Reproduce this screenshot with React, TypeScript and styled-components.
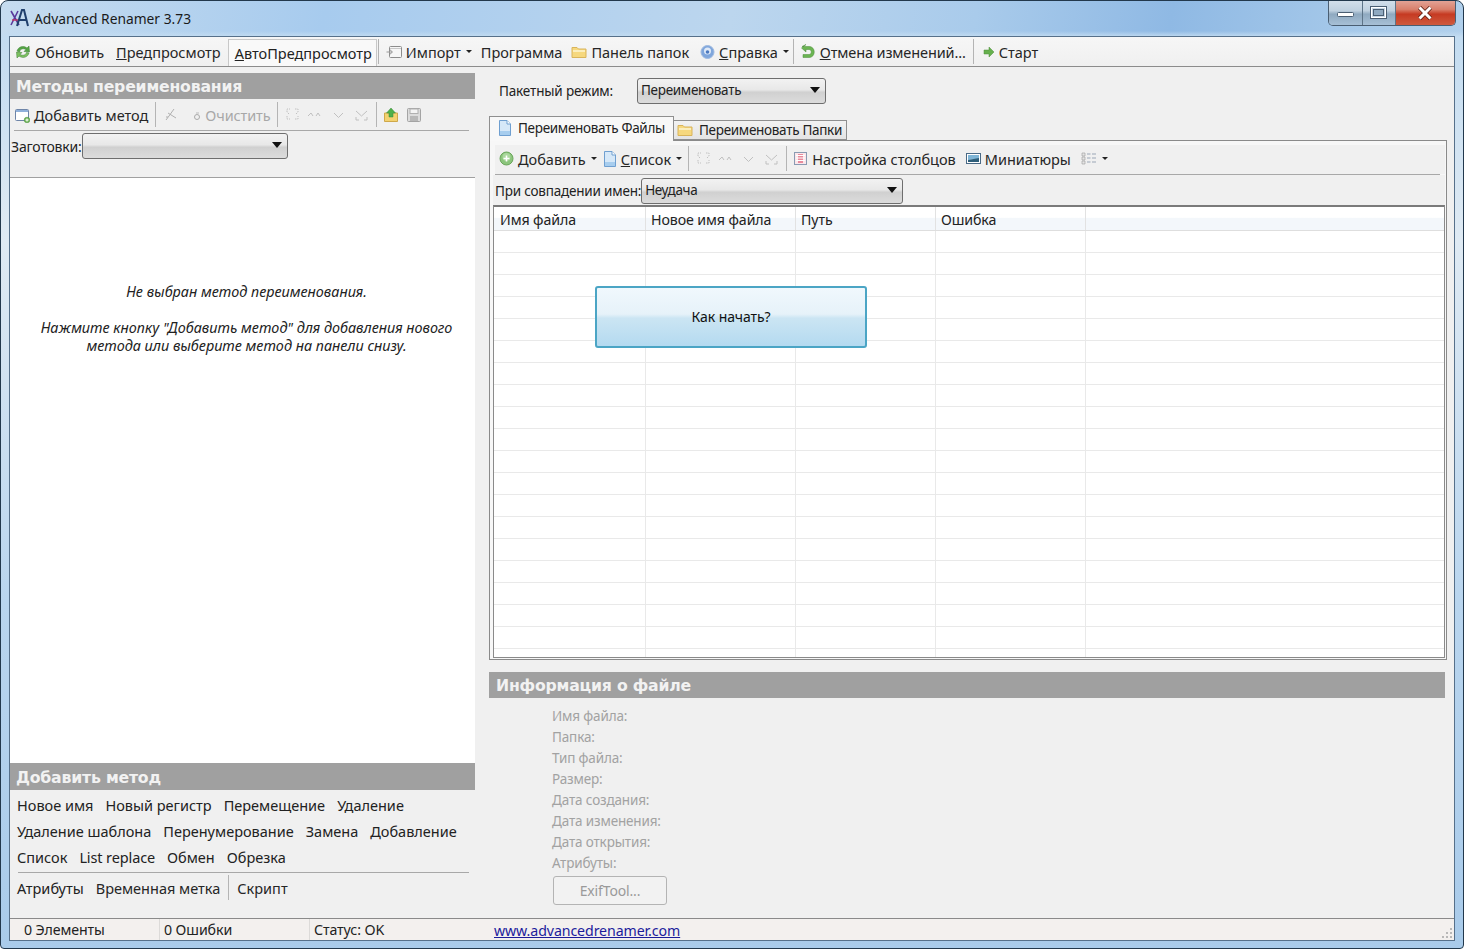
import React from "react";
import styled, { createGlobalStyle } from "styled-components";

const Global = createGlobalStyle`
  html, body { margin: 0; padding: 0; background: #fff; }
  body { font-family: "Noto Sans", "Open Sans", sans-serif; font-size: 14.5px; color: #222; }
  * { box-sizing: border-box; }
`;

const Frame = styled.div`
  width: 1464px; height: 949px; display: flex; flex-direction: column;
  padding: 0 8px 7px; border: 1px solid #22384c; border-radius: 8px 8px 4px 4px;
  background:
    linear-gradient(180deg, rgba(170,205,236,0) 0, rgba(170,205,236,0) 30px, #c3dcf1 36px, #dfeaf3 240px, #b9d5ee 600px, #a9cbea 949px),
    linear-gradient(100deg, #c6dcef 0%, #a7cbee 20%, #bcd6ee 45%, #a9cbeb 60%, #8fb9e4 72%, #a9cbea 85%, #c0d9ef 100%);
`;
const TitleBar = styled.div`
  height: 35px; flex: none; display: flex; align-items: center; justify-content: space-between;
`;
const TitleLeft = styled.div`display: flex; align-items: center; gap: 4px; color: #1a1a1a; font-size: 13.8px;`;
const WinControls = styled.div`
  display: flex; align-self: flex-start; height: 25px; margin-top: 0; margin-right: -1px;
  border: 1px solid #4a5e72; border-top: none; border-radius: 0 0 5px 5px; overflow: hidden;
`;
const WinButton = styled.div<{ $w: number; $close?: boolean }>`
  width: ${p => p.$w}px; display: flex; align-items: center; justify-content: center;
  border-right: 1px solid ${p => (p.$close ? "transparent" : "#5d7488")};
  background: ${p => p.$close
    ? "linear-gradient(180deg,#e2a295 0,#d9806c 35%,#c63a22 55%,#cf5a3e 100%)"
    : "linear-gradient(180deg,#d2dfea 0,#bfd0df 40%,#8fa9c0 55%,#a7c0d6 100%)"};
`;
const Client = styled.div`
  flex: 1; min-height: 0; display: flex; flex-direction: column;
  background: #f0f0f0; border: 1px solid #56708a;
`;
const MainBar = styled.div`
  height: 30px; flex: none; display: flex; align-items: center; margin-top: 0;
  padding-left: 5px; background: linear-gradient(180deg,#f6f6f6,#f0f0f0); border-bottom: 1px solid #8c8c8c;
`;
const ToolBtn = styled.div<{ $ml?: number; $off?: boolean }>`
  display: flex; align-items: center; gap: 4px; margin-left: ${p => p.$ml ?? 0}px; white-space: nowrap;
  color: ${p => (p.$off ? "#a8a8a8" : "#262626")}; line-height: 20px;
`;
const CheckedBtn = styled.div`
  display: flex; align-items: center; height: 27px; margin: 2px 0 0 7px; padding: 0 4px 0 6px;
  background: #f9f9f9; border: 1px solid #c8c8c8; border-bottom: none; white-space: nowrap;
`;
const TightLabel = styled.span`letter-spacing: -0.12px;`;
const Sep = styled.div<{ $ml: number; $h?: number }>`
  width: 1px; height: ${p => p.$h ?? 25}px; background: #b4b4b4; flex: none; margin-left: ${p => p.$ml}px;
`;
const Caret = styled.span`
  width: 0; height: 0; border: 3px solid transparent; border-top: 3px solid #222; border-bottom: 0;
  margin-left: 1px; display: inline-block; flex: none;
`;
const Main = styled.div`flex: 1; min-height: 0; display: flex;`;
const LeftCol = styled.div`width: 465px; flex: none; display: flex; flex-direction: column; padding-top: 6px;`;
const RightCol = styled.div`width: 958px; margin-left: 14px; flex: none; display: flex; flex-direction: column; padding-top: 11px;`;
const SectionHead = styled.div<{ $h?: number; $ml?: number; $pt?: number }>`
  height: ${p => p.$h ?? 26}px; flex: none; display: flex; align-items: center;
  padding-left: ${p => p.$ml ?? 6}px; padding-top: ${p => p.$pt ?? 0}px; background: #a0a0a0; color: #f2f2f2;
  font: bold 15.7px "DejaVu Sans", Verdana, sans-serif; letter-spacing: -0.2px;
`;
const LeftTools = styled.div`
  height: 30px; margin: 2px 6px 0 4px; flex: none; display: flex; align-items: center; padding-bottom: 2px; border-bottom: 1px solid #a8a8a8;
`;
const PresetRow = styled.div`
  height: 47px; flex: none; display: flex; align-items: flex-start; padding: 2px 0 0 1px;
  border-bottom: 1px solid #a0a0a0;
`;
const FieldLabel = styled.span<{ $narrow?: boolean }>`
  font-size: ${p => (p.$narrow ? 13.5 : 14)}px; letter-spacing: -0.2px;
  line-height: 27px; white-space: nowrap;
`;
const Select = styled.div<{ $w: number }>`
  width: ${p => p.$w}px; height: 26px; flex: none; display: flex; align-items: center; justify-content: space-between;
  padding: 0 5px 2px 3px; border: 1px solid #6e6e6e; border-radius: 3px; font-size: 13.5px; letter-spacing: -0.3px;
  background: linear-gradient(180deg,#f2f2f2 0,#e8e8e8 45%,#d0d0d0 55%,#dcdcdc 100%);
`;
const SelectCaret = styled.span`
  width: 0; height: 0; border: 5px solid transparent; border-top: 6px solid #111; border-bottom: 0; flex: none;
`;
const WhiteArea = styled.div`
  flex: 1; min-height: 0; background: #fff; padding: 105px 18px 0 26px; text-align: center;
  font-style: italic; line-height: 18px; font-size: 14.4px; color: #222;
`;
const Hint = styled.p`margin: 0 0 18px;`;
const MethodRows = styled.div`padding: 2px 0 16px 7px; display: flex; flex-direction: column;`;
const MethodRow = styled.div`height: 26px; display: flex; align-items: center; gap: 12px; white-space: nowrap;`;
const MethodDivider = styled.div`height: 1px; background: #a8a8a8; margin: 2px 6px 0 1px;`;
const MethodLast = styled.div`height: 29px; display: flex; align-items: center; white-space: nowrap;`;
const ModeRow = styled.div`height: 25px; flex: none; display: flex; align-items: center; padding-left: 10px;`;
const ModeLabel = styled.span`width: 138px; font-size: 13.5px; letter-spacing: -0.15px;`;
const Tabs = styled.div`height: 24px; margin-top: 13px; flex: none; display: flex; align-items: flex-end; position: relative; z-index: 1;`;
const Tab = styled.div<{ $active?: boolean }>`
  display: flex; align-items: center; white-space: nowrap; font-size: 13.5px; letter-spacing: -0.3px;
  border: 1px solid #8f8f8f; border-bottom: ${p => (p.$active ? "none" : "1px solid #8f8f8f")};
  ${p => p.$active
    ? "width: 185px; height: 25px; margin-bottom: -1px; background: #f8f8f8; padding: 0 0 3px 7px; gap: 6px; border-right: 1px solid #8f8f8f;"
    : "width: 173px; height: 20px; background: linear-gradient(180deg,#f2f2f2,#e4e4e4); padding: 0 0 1px 3px; gap: 6px; border-left: none;"}
`;
const Pane = styled.div`
  height: 520px; flex: none; display: flex; flex-direction: column; padding: 4px 1px 1px 3px;
  background: #f7f7f7; border: 1px solid #8a8a8a;
`;
const PaneTools = styled.div`
  height: 29px; flex: none; margin-left: 2px; display: flex; align-items: center; background: #f0f0f0;
  padding: 0 0 2px 2px; position: relative;
`;
const PaneToolLine = styled.div`height: 1px; flex: none; background: #a8a8a8; margin: 0 5px 0 2px;`;
const CollisionRow = styled.div`height: 30px; flex: none; display: flex; align-items: flex-start; padding: 3px 0 0 2px; background: #f0f0f0;`;
const Grid = styled.div`
  flex: 1; min-height: 0; background: #fff; border: 1px solid #8a8a8a; border-top: 2px solid #7a7a7a;
  position: relative; overflow: hidden;
`;
const GridHead = styled.div`
  height: 24px; display: flex; border-bottom: 1px solid #dedede;
  background: linear-gradient(180deg,#fff 0,#fff 45%,#f3f7fb 50%,#f3f7fb 100%);
`;
const HeadCell = styled.div<{ $w: number; $pl: number }>`
  width: ${p => p.$w}px; flex: none; padding: 1px 0 0 ${p => p.$pl}px; line-height: 24px; border-right: 1px solid #e2e2e2;
  font-size: 14.2px; letter-spacing: -0.1px;
`;
const GridRow = styled.div`height: 22px; display: flex; border-bottom: 1px solid #e9e9e9;`;
const GridCell = styled.div<{ $w: number }>`width: ${p => p.$w}px; flex: none; border-right: 1px solid #e9e9e9;`;
const StartCard = styled.div`
  position: absolute; left: 101px; top: 79px; width: 272px; height: 62px; display: flex; align-items: center; justify-content: center;
  padding-bottom: 2px; border: 2px solid #4ba5c5; border-radius: 3px; font-size: 14px; letter-spacing: -0.1px; color: #111;
  background: linear-gradient(180deg,#f0f8fd 0,#e6f2f9 45%,#cbe5f3 52%,#b4daf0 100%);
`;
const InfoWrap = styled.div`margin-top: 12px; margin-right: 2px; flex: 1; display: flex; flex-direction: column;`;
const InfoList = styled.div`padding: 8px 0 0 63px; color: #a2a2a2; font-size: 13.5px; letter-spacing: -0.15px;`;
const InfoRow = styled.div`height: 21px; line-height: 21px;`;
const ExifBtn = styled.div`
  width: 114px; height: 29px; margin: 2px 0 0 1px; display: flex; align-items: center; justify-content: center;
  border: 1px solid #b4b4b4; border-radius: 3px; background: #f2f2f2; color: #9a9a9a; font-size: 14px;
`;
const Status = styled.div`
  height: 22px; flex: none; display: flex; align-items: center; background: #f3f0ee; border-top: 1px solid #8a8a8a;
  position: relative; font-size: 14.2px; letter-spacing: -0.1px;
`;
const StatusCell = styled.div<{ $w: number; $pl: number; $last?: boolean }>`
  width: ${p => p.$w}px; flex: none; padding-left: ${p => p.$pl}px; line-height: 21px; height: 21px;
  border-right: 1px solid ${p => (p.$last ? "transparent" : "#dcdad8")};
`;
const StatusLink = styled.a`color: #1c1c9c; text-decoration: underline; margin: 2px 0 0 34px; font-size: 14.2px;`;
const Grip = styled.svg`position: absolute; right: 1px; bottom: 1px;`;

const S = ({ w = 16, h = 16, children }: { w?: number; h?: number; children: React.ReactNode }) => (
  <svg width={w} height={h} viewBox={`0 0 ${w} ${h}`} style={{ flex: "none", display: "block" }}>{children}</svg>
);
const Logo = () => (
  <S w={21} h={21}>
    <path d="M2 3 L10 17 M9 3 L2 17" stroke="#5a3a9c" strokeWidth="1.6" fill="none" />
    <path d="M3 12 H9" stroke="#c03060" strokeWidth="1.4" />
    <path d="M8 18 L13 2 L15 2 L19 18 M10.500 12 H17" stroke="#1f3f6c" strokeWidth="2" fill="none" />
  </S>
);
const Refresh = () => (
  <S>
    <path d="M2 7 C3 3 8 1 12 4 L14 2 L14.500 8 L9 7.500 L11 5.500 C8 4 5 5 4.500 8 Z" fill="#55a545" stroke="#3d7f33" strokeWidth=".5" />
    <path d="M14 9 C13 13 8 15 4 12 L2 14 L1.500 8 L7 8.500 L5 10.500 C8 12 11 11 11.500 8.500 Z" fill="#7cc060" stroke="#3d7f33" strokeWidth=".5" />
  </S>
);
const Import = () => (
  <S>
    <rect x="3.500" y="2.500" width="12" height="11" rx="1" fill="#f6f6f6" stroke="#8c8c8c" />
    <path d="M.5 8 H6 M4 5.800 L6.500 8 L4 10.200" stroke="#999" fill="none" />
    <path d="M4 4.500 H15" stroke="#c8c8c8" />
  </S>
);
const Folder = () => (
  <S>
    <path d="M1 3.500 H6 L7.500 5 H15 V13.500 H1 Z" fill="#f6d87e" stroke="#d9b45a" />
    <path d="M2 7 H14" stroke="#fbeebd" strokeWidth="2" />
  </S>
);
const Help = () => (
  <S w={15} h={16}>
    <circle cx="7.500" cy="8" r="6.500" fill="#7fa6dc" stroke="#9db9e0" />
    <circle cx="7.500" cy="7" r="3.500" fill="#dfe9f7" />
    <circle cx="7.500" cy="8" r="1.800" fill="#4b79c0" />
  </S>
);
const Undo = () => (
  <S>
    <path d="M2 2.500 H9 C16 2.500 16 13.500 9 13.500 H3 V10.500 H9 C12 10.500 12 5.500 9 5.500 H6 V8 L1.500 4 L6 .5 Z" fill="#6bb552" stroke="#4a8a3a" strokeWidth=".5" />
  </S>
);
const Start = () => (
  <S w={12} h={12}>
    <path d="M1 4 H6 V1 L11 6 L6 11 V8 H1 Z" fill="#66b04d" stroke="#4d8f3a" strokeWidth=".5" />
  </S>
);
const AddMethod = () => (
  <S>
    <rect x="1.500" y="2.500" width="13" height="11" rx="1" fill="#fff" stroke="#6e85a8" />
    <rect x="2" y="3" width="12" height="2" fill="#8fb0da" />
    <circle cx="13" cy="13" r="2.800" fill="#6db656" stroke="#4a8a3a" strokeWidth=".5" />
    <path d="M11.500 13 H14.500 M13 11.500 V14.500" stroke="#fff" />
  </S>
);
const Scissors = () => (
  <S w={14} h={14}>
    <path d="M10 1 L5 8 M12 10 L4 5 M5 8 L2 12 M4 9 L2 9" stroke="#b0b0b0" fill="none" />
  </S>
);
const Dot = () => (
  <S w={8} h={16}>
    <circle cx="4" cy="10" r="2.500" fill="none" stroke="#aaa" />
    <path d="M3 6 L6 6" stroke="#bbb" />
  </S>
);
const OffA = () => (
  <S w={14} h={14}>
    <path d="M1 4 V1 H4 M9 1 H12 V4 M1 8 V11 H4 M9 11 H12 V8 M3 6 L1 4 M10 6 L12 4" stroke="#c0c0c0" fill="none" strokeDasharray="1.500 1" />
  </S>
);
const OffB = () => (
  <S w={16} h={14}>
    <path d="M2 8 L5 5 L7 8 M10 8 L12 5 L14 8" stroke="#c0c0c0" fill="none" />
  </S>
);
const OffC = () => (
  <S w={11} h={14}>
    <path d="M1 5 L5.500 9.500 L10 5" stroke="#c0c0c0" fill="none" />
  </S>
);
const OffD = () => (
  <S w={13} h={14}>
    <path d="M1 3 L6.500 8 L12 3 M1 9 V12 H4 M9 12 H12 V9" stroke="#c0c0c0" fill="none" />
  </S>
);
const Upload = () => (
  <S>
    <path d="M1.500 6 H14.500 V14.500 H1.500 Z" fill="#f3d270" stroke="#cfa84a" />
    <path d="M8 1 L12.500 6 H10 V10 H6 V6 H3.500 Z" fill="#4fb04a" stroke="#3a8a38" strokeWidth=".5" />
  </S>
);
const Save = () => (
  <S>
    <rect x="1.500" y="1.500" width="13" height="13" rx="1" fill="#dcdcdc" stroke="#a4a4a4" />
    <rect x="4" y="2" width="8" height="4.500" fill="#f4f4f4" stroke="#b0b0b0" />
    <rect x="4" y="9" width="8" height="5" fill="#b8b8b8" />
  </S>
);
const Doc = () => (
  <S w={15} h={16}>
    <path d="M2.500 .5 H10 L13.500 4 V15.500 H2.500 Z" fill="#d6e8f8" stroke="#6f9fd0" />
    <path d="M3 11 H13 V15 H3 Z" fill="#a7cdee" />
    <path d="M10 .5 V4 H13.500" fill="#fff" stroke="#6f9fd0" />
  </S>
);
const Plus = () => (
  <S w={15} h={15}>
    <circle cx="7.500" cy="7.500" r="6.500" fill="#8bc57c" stroke="#6aa65b" />
    <circle cx="7.500" cy="6" r="4" fill="#b9e0ad" opacity=".7" />
    <path d="M4.500 7.500 H10.500 M7.500 4.500 V10.500" stroke="#fff" strokeWidth="1.600" />
  </S>
);
const Columns = () => (
  <S w={15} h={15}>
    <rect x="1.500" y="1.500" width="12" height="12" fill="#fbe6ea" stroke="#8a9ab2" />
    <rect x="5" y="3" width="5" height="9" fill="#e88a9c" />
    <path d="M3 4.500 H12 M3 7 H12 M3 9.500 H12" stroke="#fff" />
  </S>
);
const Thumb = () => (
  <S w={15} h={13}>
    <rect x=".5" y="1.500" width="14" height="10" fill="#fff" stroke="#4a6a86" />
    <path d="M2 3 H13 V7 L2 8 Z" fill="#7fb5d6" />
    <path d="M2 10 L2 8 L13 6 L13 10 Z" fill="#2f5f7a" />
  </S>
);
const ViewList = () => (
  <S w={16} h={15}>
    <path d="M1 2 H4 V5 H1 Z M1 6 H4 V9 H1 Z M1 10 H4 V13 H1 Z" fill="#e4e4e4" stroke="#9a9a9a" strokeWidth=".6" />
    <path d="M6 3 H9.500 M11 3 H15 M6 7 H9.500 M11 7 H15 M6 11 H9.500 M11 11 H15" stroke="#9aa6b6" />
  </S>
);
const Minimize = () => (
  <S w={18} h={10}><rect x=".5" y="4.500" width="16" height="4" rx="1" fill="#fff" stroke="#4a5e72" /></S>
);
const Maximize = () => (
  <S w={18} h={14}><rect x="1" y="1" width="15" height="11" fill="#c8d8e6" stroke="#fff" strokeWidth="2" /><rect x=".5" y=".5" width="16" height="12" fill="none" stroke="#4a5e72" /><rect x="3.500" y="3.500" width="10" height="6" fill="#8fa9c0" stroke="#4a5e72" /></S>
);
const Close = () => (
  <S w={16} h={14}><path d="M2.500 1.500 L13.500 12.500 M13.500 1.500 L2.500 12.500" stroke="#5a1c10" strokeWidth="4.500" /><path d="M2.500 1.500 L13.500 12.500 M13.500 1.500 L2.500 12.500" stroke="#fff" strokeWidth="3" /></S>
);

const colW = [152, 150, 140, 150, 358];
const colPad = [6, 5, 5, 5];
const headers = ["Имя файла", "Новое имя файла", "Путь", "Ошибка"];
const rows = Array.from({ length: 20 }, (_, i) => i);
const info = ["Имя файла:", "Папка:", "Тип файла:", "Размер:", "Дата создания:", "Дата изменения:", "Дата открытия:", "Атрибуты:"];

export default function App() {
  return (
    <Frame>
      <Global />
      <TitleBar>
        <TitleLeft><Logo /><span>Advanced Renamer 3.73</span></TitleLeft>
        <WinControls>
          <WinButton $w={34}><Minimize /></WinButton>
          <WinButton $w={33}><Maximize /></WinButton>
          <WinButton $w={59} $close><Close /></WinButton>
        </WinControls>
      </TitleBar>
      <Client>
        <MainBar>
          <ToolBtn><Refresh /><span>Обновить</span></ToolBtn>
          <ToolBtn $ml={12}><span><u>П</u>редпросмотр</span></ToolBtn>
          <CheckedBtn><span><u>А</u>втоПредпросмотр</span></CheckedBtn>
          <Sep $ml={1} />
          <ToolBtn $ml={7}><Import /><span>Импорт</span><Caret /></ToolBtn>
          <ToolBtn $ml={9}><span>Программа</span></ToolBtn>
          <ToolBtn $ml={9}><Folder /><span>Панель папок</span></ToolBtn>
          <ToolBtn $ml={11}><Help /><span><u>С</u>правка</span><Caret /></ToolBtn>
          <Sep $ml={4} />
          <ToolBtn $ml={6}><Undo /><TightLabel><u>О</u>тмена изменений...</TightLabel></ToolBtn>
          <Sep $ml={7} />
          <ToolBtn $ml={9}><Start /><span>Старт</span></ToolBtn>
        </MainBar>
        <Main>
          <LeftCol>
            <SectionHead $pt={1}>Методы переименования</SectionHead>
            <LeftTools>
              <ToolBtn><AddMethod /><span>Добавить метод</span></ToolBtn>
              <Sep $ml={7} />
              <ToolBtn $ml={8} $off><Scissors /></ToolBtn>
              <ToolBtn $ml={15} $off><Dot /><TightLabel>Очистить</TightLabel></ToolBtn>
              <Sep $ml={6} />
              <ToolBtn $ml={8} $off><OffA /></ToolBtn>
              <ToolBtn $ml={6} $off><OffB /></ToolBtn>
              <ToolBtn $ml={11} $off><OffC /></ToolBtn>
              <ToolBtn $ml={11} $off><OffD /></ToolBtn>
              <Sep $ml={8} />
              <ToolBtn $ml={6}><Upload /></ToolBtn>
              <ToolBtn $ml={7}><Save /></ToolBtn>
            </LeftTools>
            <PresetRow>
              <FieldLabel>Заготовки:</FieldLabel>
              <Select $w={206}><span /><SelectCaret /></Select>
            </PresetRow>
            <WhiteArea>
              <Hint>Не выбран метод переименования.</Hint>
              <Hint>Нажмите кнопку "Добавить метод" для добавления нового метода или выберите метод на панели снизу.</Hint>
            </WhiteArea>
            <SectionHead $h={27} $pt={1}>Добавить метод</SectionHead>
            <MethodRows>
              <MethodRow><span>Новое имя</span><span>Новый регистр</span><span>Перемещение</span><span>Удаление</span></MethodRow>
              <MethodRow><span>Удаление шаблона</span><span>Перенумерование</span><span>Замена</span><span>Добавление</span></MethodRow>
              <MethodRow><span>Список</span><TightLabel>List replace</TightLabel><span>Обмен</span><span>Обрезка</span></MethodRow>
              <MethodDivider />
              <MethodLast>
                <span>Атрибуты</span>
                <ToolBtn $ml={12}><span>Временная метка</span></ToolBtn>
                <Sep $ml={8} />
                <ToolBtn $ml={8}><span>Скрипт</span></ToolBtn>
              </MethodLast>
            </MethodRows>
          </LeftCol>
          <RightCol>
            <ModeRow>
              <ModeLabel>Пакетный режим:</ModeLabel>
              <Select $w={189}><span>Переименовать</span><SelectCaret /></Select>
            </ModeRow>
            <Tabs>
              <Tab $active><Doc /><span>Переименовать Файлы</span></Tab>
              <Tab><Folder /><span>Переименовать Папки</span></Tab>
            </Tabs>
            <Pane>
              <PaneTools>
                <ToolBtn $ml={2}><Plus /><span><u>Д</u>обавить</span><Caret /></ToolBtn>
                <ToolBtn $ml={5}><Doc /><span><u>С</u>писок</span><Caret /></ToolBtn>
                <Sep $ml={6} />
                <ToolBtn $ml={8} $off><OffA /></ToolBtn>
                <ToolBtn $ml={6} $off><OffB /></ToolBtn>
                <ToolBtn $ml={10} $off><OffC /></ToolBtn>
                <ToolBtn $ml={11} $off><OffD /></ToolBtn>
                <Sep $ml={8} />
                <ToolBtn $ml={6}><Columns /><span>Настройка столбцов</span></ToolBtn>
                <ToolBtn $ml={10}><Thumb /><span>Миниатюры</span></ToolBtn>
                <ToolBtn $ml={10}><ViewList /><Caret /></ToolBtn>
              </PaneTools>
              <PaneToolLine />
              <CollisionRow>
                <FieldLabel $narrow>При совпадении имен:</FieldLabel>
                <Select $w={262}><span>Неудача</span><SelectCaret /></Select>
              </CollisionRow>
              <Grid>
                <GridHead>
                  {headers.map((h, i) => <HeadCell key={h} $w={colW[i]} $pl={colPad[i]}>{h}</HeadCell>)}
                </GridHead>
                {rows.map(r => (
                  <GridRow key={r}>
                    {colW.slice(0, 4).map((w, i) => <GridCell key={i} $w={w} />)}
                  </GridRow>
                ))}
                <StartCard>Как начать?</StartCard>
              </Grid>
            </Pane>
            <InfoWrap>
              <SectionHead $ml={7}>Информация о файле</SectionHead>
              <InfoList>
                {info.map(t => <InfoRow key={t}>{t}</InfoRow>)}
                <ExifBtn>ExifTool...</ExifBtn>
              </InfoList>
            </InfoWrap>
          </RightCol>
        </Main>
        <Status>
          <StatusCell $w={150} $pl={14}>0 Элементы</StatusCell>
          <StatusCell $w={150} $pl={4}>0 Ошибки</StatusCell>
          <StatusCell $w={150} $pl={4} $last>Статус: OK</StatusCell>
          <StatusLink href="#">www.advancedrenamer.com</StatusLink>
          <Grip width="12" height="12" viewBox="0 0 12 12">
            <path d="M9 1h2v2H9z M9 5h2v2H9z M5 5h2v2H5z M9 9h2v2H9z M5 9h2v2H5z M1 9h2v2H1z" fill="#b8b8b8" />
          </Grip>
        </Status>
      </Client>
    </Frame>
  );
}
